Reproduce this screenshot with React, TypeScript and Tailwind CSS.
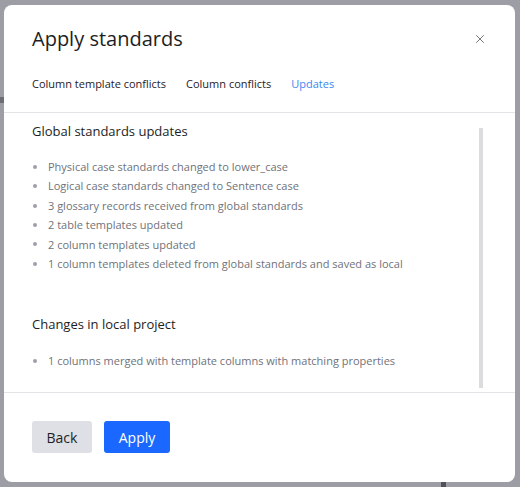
import React from "react";
import { X } from "lucide-react";

const globalUpdates = [
  "Physical case standards changed to lower_case",
  "Logical case standards changed to Sentence case",
  "3 glossary records received from global standards",
  "2 table templates updated",
  "2 column templates updated",
  "1 column templates deleted from global standards and saved as local",
];

const localChanges = ["1 columns merged with template columns with matching properties"];

function BulletList({ items }: { items: string[] }) {
  return (
    <ul className="text-[11px] leading-[19.4px] text-[#6f727a]">
      {items.map((t) => (
        <li key={t} className="flex items-center">
          <span className="w-[4px] h-[4px] rounded-full bg-[#9ca0a8] ml-[1px] mr-[11px]" />
          {t}
        </li>
      ))}
    </ul>
  );
}

export default function App() {
  return (
    <div
      className="relative w-[520px] h-[487px] bg-[#9d9ea5] overflow-hidden"
      style={{ fontFamily: '"Open Sans", "Noto Sans", sans-serif' }}
    >
      <div className="absolute left-0 top-[97px] w-[4px] h-[6px] bg-[#6c6d75]" />
      <div className="absolute left-[441px] top-[482px] w-[5px] h-[5px] bg-[#50515a]" />
      <div className="relative ml-[4px] mt-[5px] w-[511px] h-[477px] bg-white rounded-lg flex flex-col">
        <button className="absolute right-[28px] top-[27px] text-[#4b4f57]">
          <X size={14} strokeWidth={1.3} />
        </button>
        <div className="px-[28px] pt-[19px] pb-[19px] border-b border-[#e3e4e8]">
          <h1 className="text-[20px] leading-[30px] text-[#1c1e24]">Apply standards</h1>
          <div className="mt-[21px] flex gap-[20px] text-[11px] leading-[18px]">
            <span className="text-[#1f2128]">Column template conflicts</span>
            <span className="text-[#1f2128]">Column conflicts</span>
            <span className="text-[#3d87f5]">Updates</span>
          </div>
        </div>
        <div className="flex h-[280px] border-b border-[#e3e4e8]">
          <div className="flex-1 pl-[28px] pt-[8px]">
            <h2 className="text-[13px] leading-[20px] text-[#1c1e24]">Global standards updates</h2>
            <div className="mt-[16px]">
              <BulletList items={globalUpdates} />
            </div>
            <h2 className="mt-[41px] text-[13px] leading-[20px] text-[#1c1e24]">Changes in local project</h2>
            <div className="mt-[17px]">
              <BulletList items={localChanges} />
            </div>
          </div>
          <div className="w-[4px] h-[260px] mt-[15px] mr-[32px] bg-[#dcdcde]" />
        </div>
        <div className="px-[28px] pt-[28px] flex gap-[12px]">
          <button className="h-[32px] w-[60px] rounded-[3px] bg-[#dee0e5] text-[14px] text-[#1c1e24]">Back</button>
          <button className="h-[32px] w-[66px] rounded-[3px] bg-[#1a68ff] text-[14px] text-white">Apply</button>
        </div>
      </div>
    </div>
  );
}
